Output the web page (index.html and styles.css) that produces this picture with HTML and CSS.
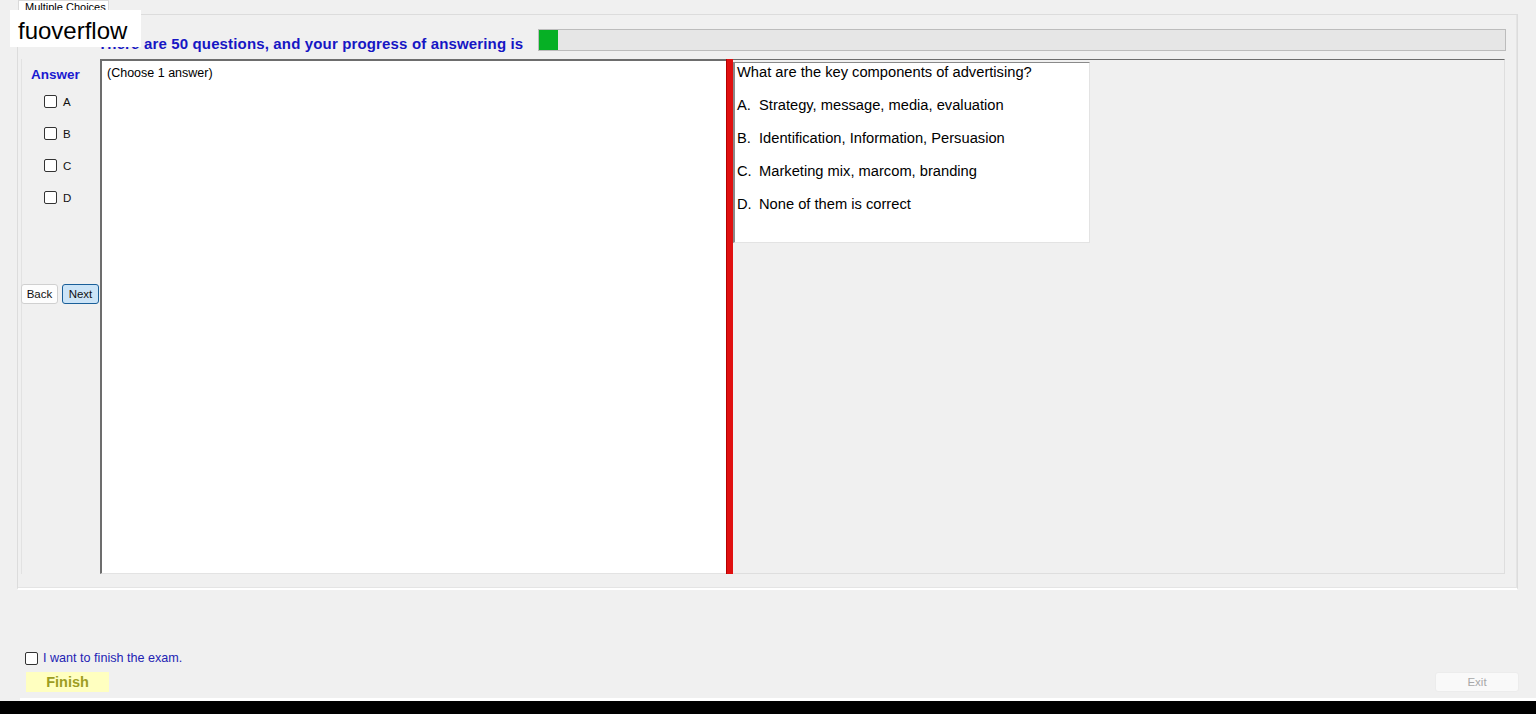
FILE: index.html
```html
<!DOCTYPE html>
<html lang="en">
<head>
  <meta charset="UTF-8" />
  <title>Multiple Choices</title>
  <link rel="stylesheet" href="styles.css">
</head>
<body>
  <div class="brand">fuoverflow</div>

  <div class="tabs">
    <div class="tab">Multiple Choices</div>
  </div>

  <div class="tabpage">
    <div class="header">
      <div class="header-text">There are 50 questions, and your progress of answering is</div>
      <div class="progress"><div class="progress-fill" style="width: 1.9%"></div></div>
    </div>

    <div class="main">
      <div class="answer-col">
        <div class="answer-title">Answer</div>
        <label class="opt"><input type="checkbox"> A</label>
        <label class="opt"><input type="checkbox"> B</label>
        <label class="opt"><input type="checkbox"> C</label>
        <label class="opt"><input type="checkbox"> D</label>
        <div class="nav">
          <button class="btn">Back</button>
          <button class="btn btn-active">Next</button>
        </div>
      </div>

      <div class="answer-box">(Choose 1 answer)</div>
      <div class="splitter"></div>

      <div class="question-panel">
        <div class="question-box">
          <div class="q-title">What are the key components of advertising?</div>
          <div class="q-opt"><span class="q-letter">A.</span>Strategy, message, media, evaluation</div>
          <div class="q-opt"><span class="q-letter">B.</span>Identification, Information, Persuasion</div>
          <div class="q-opt"><span class="q-letter">C.</span>Marketing mix, marcom, branding</div>
          <div class="q-opt"><span class="q-letter">D.</span>None of them is correct</div>
        </div>
      </div>
    </div>
  </div>

  <div class="footer">
    <div class="finish-area">
      <label class="finish-check"><input type="checkbox"> I want to finish the exam.</label>
      <button class="finish-btn">Finish</button>
    </div>
    <button class="exit-btn" disabled>Exit</button>
  </div>

  <div class="status-line"></div>
  <div class="taskbar"></div>
</body>
</html>
```

FILE: styles.css
```css
body {
  margin: 0;
  height: 714px;
  overflow: hidden;
  background: #f0f0f0;
  font-family: "Liberation Sans", Arial, sans-serif;
  color: #000;
  position: relative;
}

.brand {
  position: absolute;
  top: 10px;
  left: 10px;
  width: 131px;
  height: 37px;
  background: #fff;
  font-size: 24px;
  line-height: 42px;
  padding-left: 8px;
  box-sizing: border-box;
  z-index: 5;
}

.tabs {
  height: 14px;
  padding-left: 18px;
  display: flex;
}
.tab {
  background: #fff;
  border: 1px solid #d9d9d9;
  border-bottom: none;
  font-size: 11px;
  line-height: 13px;
  padding: 0 6px;
  height: 14px;
  box-sizing: border-box;
  width: 91px;
  overflow: hidden;
  white-space: nowrap;
}

.tabpage {
  margin-left: 17px;
  width: 1501px;
  height: 576px;
  box-sizing: border-box;
  border: 1px solid #dcdcdc;
  border-bottom: 2px solid #fff;
  box-shadow: inset -1px -1px 0 #e4e4e4;
  padding-top: 14px;
}

.header {
  display: flex;
  align-items: center;
  height: 22px;
  padding-left: 80px;
  padding-right: 11px;
}
.header-text {
  font-weight: bold;
  font-size: 15px;
  letter-spacing: 0.15px;
  color: #1616c4;
  white-space: nowrap;
  padding-top: 6px;
}
.progress {
  flex: 1;
  height: 22px;
  margin-left: 15px;
  background: #e6e6e6;
  border: 1px solid #bcbcbc;
  box-sizing: border-box;
}
.progress-fill {
  height: 100%;
  background: #06b025;
}

.main {
  display: flex;
  margin-top: 8px;
  height: 515px;
  padding-right: 12px;
}

.answer-col {
  width: 79px;
  flex: none;
  display: flex;
  flex-direction: column;
  border-left: 1px solid #e2e2e2;
  margin-left: 3px;
  box-sizing: border-box;
}
.answer-title {
  font-weight: bold;
  font-size: 13.5px;
  color: #1a1ad0;
  margin: 8px 0 13px 9px;
}
.opt {
  display: flex;
  align-items: center;
  gap: 6px;
  font-size: 11.5px;
  height: 13px;
  margin: 0 0 19px 22px;
  color: #111;
}
input[type=checkbox] {
  appearance: none;
  width: 13px;
  height: 13px;
  margin: 0;
  border: 1px solid #333;
  border-radius: 2px;
  background: #fff;
  box-sizing: border-box;
}

.nav {
  display: flex;
  gap: 4px;
  margin: 61px 0 0 -1px;
}
.btn {
  font-family: "Liberation Sans", Arial, sans-serif;
  font-size: 11.5px;
  height: 20px;
  padding: 0;
  width: 37px;
  background: #fdfdfd;
  border: 1px solid #d0d0d0;
  border-radius: 3px;
  color: #111;
}
.btn-active {
  background: #cce4f7;
  border-color: #1a5f99;
}

.answer-box {
  width: 626px;
  flex: none;
  background: #fff;
  border-left: 2px solid #6d6d6d;
  border-top: 2px solid #6d6d6d;
  border-bottom: 1px solid #e3e3e3;
  box-sizing: border-box;
  font-size: 12.5px;
  padding: 5px 5px;
}

.splitter {
  width: 7px;
  flex: none;
  background: #e01010;
  border-left: 1px solid #b50000;
  box-sizing: border-box;
}

.question-panel {
  flex: 1;
  border-top: 1px solid #6d6d6d;
  border-right: 1px solid #dedede;
  border-bottom: 1px solid #dedede;
  padding-top: 2px;
}
.question-box {
  width: 357px;
  height: 181px;
  box-sizing: border-box;
  background: #fff;
  border-left: 2px solid #8a8a8a;
  border-top: 1px solid #8a8a8a;
  border-right: 1px solid #e3e3e3;
  border-bottom: 1px solid #e3e3e3;
  font-size: 14.7px;
  padding-left: 2px;
}
.q-title {
  line-height: 18px;
}
.q-opt {
  line-height: 18px;
  margin-top: 15px;
}
.q-letter {
  display: inline-block;
  width: 22px;
}

.footer {
  display: flex;
  justify-content: space-between;
  align-items: flex-end;
  height: 102px;
  padding: 0 17px 0 25px;
}
.finish-area {
  display: flex;
  flex-direction: column;
}
.finish-check {
  display: flex;
  align-items: center;
  gap: 5px;
  font-size: 12.6px;
  color: #2323b4;
}
.finish-btn {
  margin: 7px 0 0 1px;
  width: 83px;
  height: 20px;
  background: #ffffc0;
  border: none;
  font-family: "Liberation Sans", Arial, sans-serif;
  font-weight: bold;
  font-size: 14.5px;
  color: #9d9d22;
  padding: 0;
}
.exit-btn {
  width: 84px;
  height: 20px;
  background: #f9f9f9;
  border: 1px solid #ececec;
  border-radius: 3px;
  font-family: "Liberation Sans", Arial, sans-serif;
  font-size: 11.5px;
  color: #a8a8a8;
  padding: 0;
}

.status-line {
  margin: 6px 0 0 20px;
  height: 3px;
  background: #fff;
}
.taskbar {
  height: 13px;
  background: #000;
}
```
